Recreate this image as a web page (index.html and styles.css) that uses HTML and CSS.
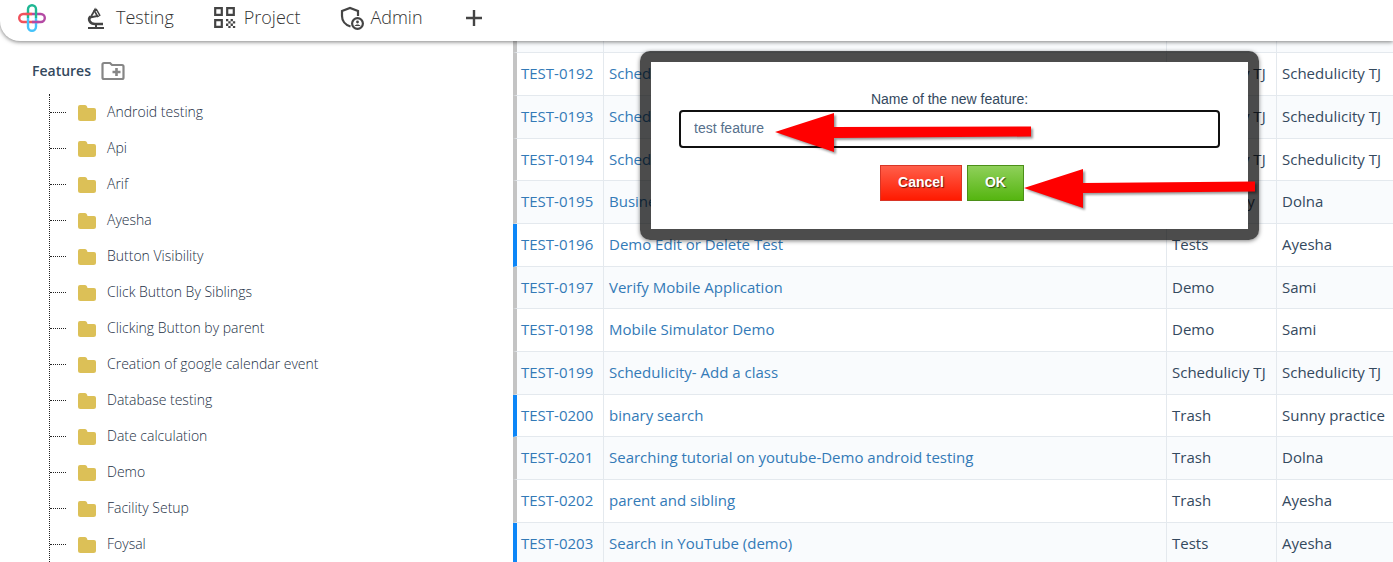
FILE: index.html
```html
<!DOCTYPE html>
<html lang="en">
<head>
<meta charset="utf-8">
<title>Features</title>
<link rel="stylesheet" href="styles.css">
</head>
<body>
<header class="topbar">
  <a class="logo" href="#" aria-label="Home">
    <svg width="30" height="30" viewBox="0 0 30 30" fill="none" stroke-width="2.4">
      <path d="M15 11H6.200a4 4 0 0 0 0 8H15" stroke="#f0525c"/>
      <path d="M15 11h8.800a4 4 0 0 1 0 8H15" stroke="#b44aa4"/>
      <path d="M11 15V6.200a4 4 0 0 1 8 0V15" stroke="#1fb793"/>
      <path d="M19 15v8.800a4 4 0 0 1-8 0V15" stroke="#45c3fa"/>
      <path d="M8.500 11H15" stroke="#f0525c"/>
      <path d="M15 19h6.500" stroke="#b44aa4"/>
    </svg>
  </a>
  <nav class="menu">
    <a href="#">
      <svg width="24" height="24" viewBox="0 0 24 24" fill="none" stroke="#444" stroke-width="2">
        <path d="M2 22h16M10 17v5"/>
        <path d="M4.500 10.500C1.500 13.500 4 18 9 18h8" stroke-width="2.600"/>
        <path d="M4.500 11.500 9 3.500l2.500 6.500z" stroke-width="1.800"/>
        <path d="M9 3.500 13 10.500" stroke-width="4"/>
        <path d="M10 5l2.500 4.500" stroke="#fff" stroke-width="1"/>
      </svg>
      <span>Testing</span></a>
    <a href="#">
      <svg width="24" height="24" viewBox="0 0 24 24" fill="none" stroke="#444" stroke-width="2.200">
        <path d="M1.200 2.200h6.600v6.600H1.200zM13.200 2.200h6.600v6.600h-6.600zM1.200 14.200h6.600v6.600H1.200z"/>
        <path fill="#444" stroke="none" d="M12 13h2.300v2.300H12zM16.600 13h2.300v2.300h-2.300zM14.300 15.300h2.300v2.300h-2.300zM18.900 15.300h2.300v2.300h-2.300zM12 17.600h2.300v2.300H12zM16.600 17.600h2.300v2.300h-2.300zM14.300 19.900h2.300V22h-2.300zM18.900 19.900h2.300V22h-2.300z"/>
      </svg>
      <span>Project</span></a>
    <a href="#">
      <svg width="24" height="24" viewBox="0 0 24 24" fill="none" stroke="#444" stroke-width="2.200">
        <path d="M10.500 20.500C5 19 2 14.500 2 10V5l8-3 8 3v5"/>
        <circle cx="17.500" cy="17.500" r="5.400"/>
        <circle cx="17.500" cy="16" r="1.400" fill="#444" stroke="none"/>
        <path d="M14.500 20c1-2 5-2 6 0z" fill="#444" stroke="none"/>
      </svg>
      <span>Admin</span></a>
  </nav>
  <button class="add" type="button" aria-label="Add">
    <svg width="16" height="16" viewBox="0 0 16 16" stroke="#444" stroke-width="2.400"><path d="M8 0v16M0 8h16"/></svg>
  </button>
</header>

<main class="layout">
  <aside class="sidebar">
    <div class="side-head">
      <h2>Features</h2>
      <button class="new-folder" type="button" aria-label="New feature">
        <svg width="24" height="20" viewBox="0 0 24 20" fill="none" stroke="#868686" stroke-width="2.200">
          <path d="M3 2h6l2 2h10a1.500 1.500 0 0 1 1.500 1.500v11A1.500 1.500 0 0 1 21 18H3a1.500 1.500 0 0 1-1.500-1.500v-13A1.500 1.500 0 0 1 3 2z"/>
          <path d="M15.500 7v8M11.500 11h8" stroke-width="2.600"/>
        </svg>
      </button>
    </div>
    <svg class="defs" width="0" height="0"><symbol id="folder" viewBox="0 0 18 16"><path fill="#dcc057" d="M2 0h5q1.500 0 2 1.500l.5 1.500H16q2 0 2 2v8.500q0 2.500-2.500 2.500h-13Q0 16 0 13.500V2Q0 0 2 0z"/></symbol></svg>
    <ul class="tree">
      <li><svg class="folder"><use href="#folder"/></svg><a href="#">Android testing</a></li>
      <li><svg class="folder"><use href="#folder"/></svg><a href="#">Api</a></li>
      <li><svg class="folder"><use href="#folder"/></svg><a href="#">Arif</a></li>
      <li><svg class="folder"><use href="#folder"/></svg><a href="#">Ayesha</a></li>
      <li><svg class="folder"><use href="#folder"/></svg><a href="#">Button Visibility</a></li>
      <li><svg class="folder"><use href="#folder"/></svg><a href="#">Click Button By Siblings</a></li>
      <li><svg class="folder"><use href="#folder"/></svg><a href="#">Clicking Button by parent</a></li>
      <li><svg class="folder"><use href="#folder"/></svg><a href="#">Creation of google calendar event</a></li>
      <li><svg class="folder"><use href="#folder"/></svg><a href="#">Database testing</a></li>
      <li><svg class="folder"><use href="#folder"/></svg><a href="#">Date calculation</a></li>
      <li><svg class="folder"><use href="#folder"/></svg><a href="#">Demo</a></li>
      <li><svg class="folder"><use href="#folder"/></svg><a href="#">Facility Setup</a></li>
      <li><svg class="folder"><use href="#folder"/></svg><a href="#">Foysal</a></li>
    </ul>
  </aside>

  <section class="content">
    <table class="tests">
      <colgroup><col class="c-id"><col><col class="c-feature"><col class="c-owner"></colgroup>
      <tbody>
        <tr class="spacer"><td></td><td></td><td></td><td></td></tr>
        <tr><td><a href="#">TEST-0192</a></td><td><a href="#">Schedulicity</a></td><td>Scheduliciy TJ</td><td>Schedulicity TJ</td></tr>
        <tr><td><a href="#">TEST-0193</a></td><td><a href="#">Schedulicity</a></td><td>Scheduliciy TJ</td><td>Schedulicity TJ</td></tr>
        <tr><td><a href="#">TEST-0194</a></td><td><a href="#">Schedulicity</a></td><td>Scheduliciy TJ</td><td>Schedulicity TJ</td></tr>
        <tr><td><a href="#">TEST-0195</a></td><td><a href="#">Business</a></td><td>Schedulicity</td><td>Dolna</td></tr>
        <tr class="active"><td><a href="#">TEST-0196</a></td><td><a href="#">Demo Edit or Delete Test</a></td><td>Tests</td><td>Ayesha</td></tr>
        <tr><td><a href="#">TEST-0197</a></td><td><a href="#">Verify Mobile Application</a></td><td>Demo</td><td>Sami</td></tr>
        <tr><td><a href="#">TEST-0198</a></td><td><a href="#">Mobile Simulator Demo</a></td><td>Demo</td><td>Sami</td></tr>
        <tr><td><a href="#">TEST-0199</a></td><td><a href="#">Schedulicity- Add a class</a></td><td>Scheduliciy TJ</td><td>Schedulicity TJ</td></tr>
        <tr class="active"><td><a href="#">TEST-0200</a></td><td><a href="#">binary search</a></td><td>Trash</td><td>Sunny practice</td></tr>
        <tr><td><a href="#">TEST-0201</a></td><td><a href="#">Searching tutorial on youtube-Demo android testing</a></td><td>Trash</td><td>Dolna</td></tr>
        <tr><td><a href="#">TEST-0202</a></td><td><a href="#">parent and sibling</a></td><td>Trash</td><td>Ayesha</td></tr>
        <tr class="active"><td><a href="#">TEST-0203</a></td><td><a href="#">Search in YouTube (demo)</a></td><td>Tests</td><td>Ayesha</td></tr>
      </tbody>
    </table>
  </section>
</main>

<div class="dialog" role="dialog" aria-labelledby="prompt-label">
  <form class="prompt">
    <label id="prompt-label" for="feature-name">Name of the new feature:</label>
    <input id="feature-name" type="text" value="test feature">
    <div class="actions">
      <button class="btn cancel" type="button">Cancel</button>
      <button class="btn ok" type="button">OK</button>
    </div>
  </form>
  <svg class="arrows" width="619" height="189" viewBox="0 0 619 189" fill="#f00" aria-hidden="true">
    <path d="M135 81 194 62V76L391 75.500V85.500L194 87V101z"/>
    <path d="M384 137 443 118V132L615 130.500V140.500L443 142V157z"/>
  </svg>
</div>
</body>
</html>
```

FILE: styles.css
```css
* {
  box-sizing: border-box;
}

body {
  margin: 0;
  height: 100vh;
  overflow: hidden;
  display: flex;
  flex-direction: column;
  background: #fff;
  color: #34495e;
  font-family: "Open Sans", sans-serif;
  font-size: 14px;
}

a {
  color: inherit;
  text-decoration: none;
}

button {
  padding: 0;
  border: 0;
  background: none;
  font: inherit;
}

svg {
  display: block;
  flex: none;
}

.topbar {
  z-index: 1;
  flex: none;
  display: flex;
  align-items: center;
  height: 41px;
  padding: 0 17px 6px;
  background: #fff;
  border-bottom-left-radius: 20px;
  box-shadow: 0 1px 4px rgba(0, 0, 0, 0.5);
}

.menu {
  display: flex;
  gap: 40px;
  margin: 0 43px 0 39px;
}

.menu a {
  display: flex;
  align-items: center;
  gap: 6px;
  color: #333;
  font-size: 18px;
  font-weight: 300;
  line-height: 22px;
}

.menu span {
  padding-bottom: 2px;
}

.layout {
  flex: 1;
  min-height: 0;
  display: grid;
  grid-template-columns: 513px 1fr;
}

.sidebar,
.content {
  min-height: 0;
  overflow: hidden;
}

.side-head {
  display: flex;
  align-items: center;
  gap: 10px;
  height: 53px;
  padding: 7px 0 0 32px;
}

.side-head h2 {
  margin: 0;
  padding-bottom: 1px;
  font-size: 14px;
  font-weight: 600;
}

.defs {
  width: 0;
  height: 0;
}

.tree {
  list-style: none;
  margin: 0 0 0 49px;
  padding: 0;
  border-left: 1px dotted #222;
}

.tree li {
  display: flex;
  align-items: center;
  height: 36px;
}

.tree li::before {
  content: "";
  width: 16px;
  margin-right: 12px;
  border-top: 1px dotted #222;
}

.tree a {
  padding-bottom: 2px;
  color: #1c2f45;
  font-weight: 300;
}

.folder {
  width: 18px;
  height: 16px;
  margin: 2px 11px 0 0;
}

.tests {
  width: 100%;
  table-layout: fixed;
  border-collapse: separate;
  border-spacing: 0;
  font-size: 15px;
}

.c-id {
  width: 91px;
}

.c-feature {
  width: 110px;
}

.c-owner {
  width: 116px;
}

.tests td {
  height: 43px;
  padding: 0 5px 2px;
  border-right: 1px solid #e4e9ee;
  border-bottom: 1px solid #e4e9ee;
  line-height: 20px;
  white-space: nowrap;
}

.tests tr:nth-child(3n + 4) td {
  height: 42px;
}

.tests tr:nth-child(odd) {
  background: #f9fbfd;
}

.tests td:first-child {
  padding-left: 4px;
  border-left: 4px solid #c4c4c4;
}

.tests td:last-child {
  border-right: 0;
}

.tests .active td:first-child {
  border-left-color: #0d86f7;
}

.tests .spacer td {
  height: 12px;
}

.tests a {
  color: #337ab7;
}

.dialog {
  position: absolute;
  z-index: 2;
  top: 51px;
  right: 134px;
  width: 619px;
  padding: 11px;
  border-radius: 10px;
  background: rgba(0, 0, 0, 0.7);
  box-shadow: 0 1px 4px rgba(0, 0, 0, 0.5);
}

.prompt {
  display: flex;
  flex-direction: column;
  padding: 28px;
  background: #fff;
  font-family: "Liberation Sans", sans-serif;
  text-align: center;
}

.prompt label {
  padding-bottom: 2px;
  line-height: 18px;
}

.prompt input {
  height: 38px;
  padding: 0 13px 2px;
  border: 2px solid #101010;
  border-radius: 4px;
  outline: 0;
  background: #fff;
  color: #56708c;
  font: 14px "Liberation Sans", sans-serif;
}

.actions {
  display: flex;
  justify-content: center;
  gap: 5px;
  margin-top: 17px;
  padding-left: 5px;
}

.btn {
  height: 36px;
  padding: 0 17px 2px;
  border: 1px solid;
  color: #fff;
  font-size: 14px;
  font-weight: 700;
  text-shadow: 1px 1px 1px rgba(0, 0, 0, 0.6);
}

.cancel {
  border-color: #d83526;
  background: linear-gradient(#ff5f4a, #ff1a00);
}

.ok {
  border-color: #4b8f18;
  background: linear-gradient(#8fd05a, #55b510);
}

.arrows {
  position: absolute;
  top: 0;
  left: 0;
  pointer-events: none;
  filter: drop-shadow(2px 2px 1px rgba(0, 0, 0, 0.4));
}
```
